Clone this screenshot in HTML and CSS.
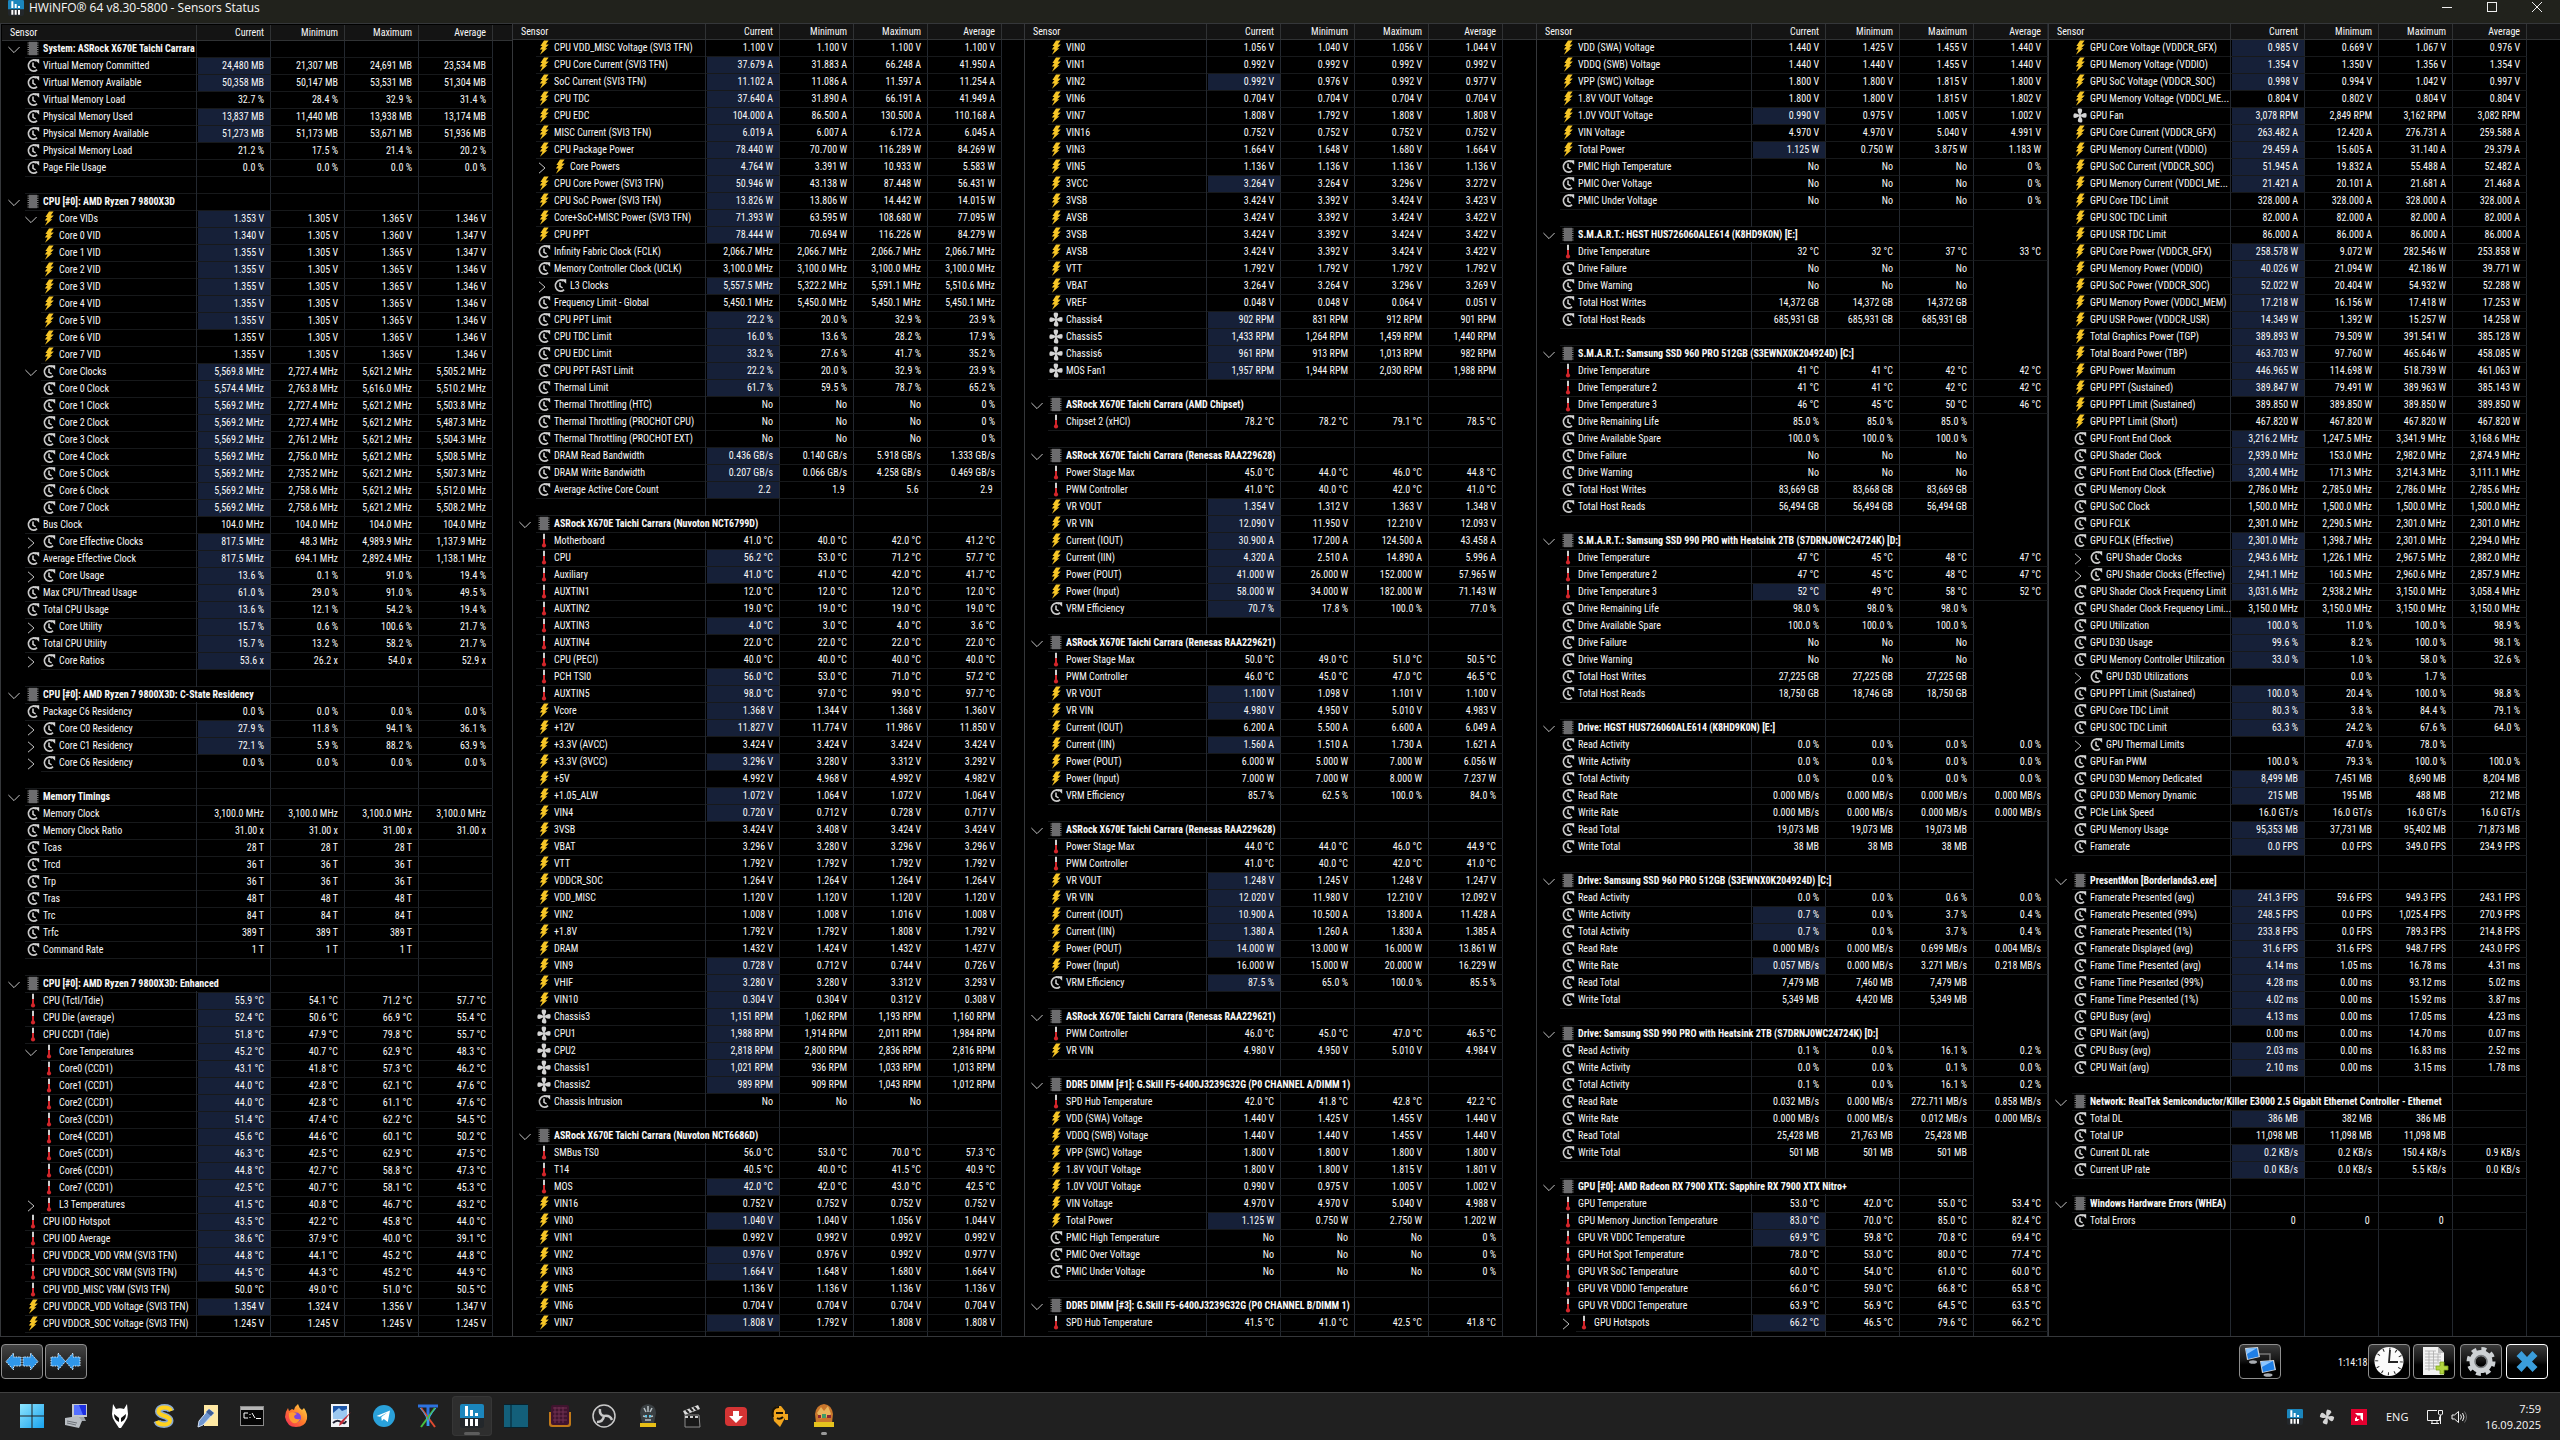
FILE: index.html
```html
<!DOCTYPE html>
<html lang="en">
<head>
<meta charset="utf-8">
<title>HWiNFO® 64 v8.30-5800 - Sensors Status</title>
<link rel="stylesheet" href="styles.css">
</head>
<body>
<svg class="defs" aria-hidden="true">
  <symbol id="i-clock" viewBox="0 0 14 15">
    <path d="M10.6 3.2A5 5.6 0 1 0 11 11.6" fill="none" stroke="#c9c9c9" stroke-width="1.8"/>
    <path d="M8.6 1.2h4.6v4.6z" fill="#d6d6d6"/>
    <path d="M7 4.4v4l2.6 1.4" fill="none" stroke="#d6d6d6" stroke-width="1.5"/>
  </symbol>
  <symbol id="i-volt" viewBox="0 0 14 15">
    <path d="M7 .4h4.6L8.8 4.4h3L8.2 8.2h2.2L3 14.8l2.6-5.2H2.8L5.4 6H3.4z" fill="#f6c526"/>
  </symbol>
  <symbol id="i-temp" viewBox="0 0 14 15">
    <path d="M6 .8h2v7H6z" fill="#cfcfcf"/>
    <path d="M6 6h2v5H6z" fill="#d3262b"/>
    <circle cx="7" cy="12.4" r="2.1" fill="#d3262b"/>
  </symbol>
  <symbol id="i-fan" viewBox="0 0 14 15">
    <g fill="#d4d4d4">
      <path d="M5 .8Q8.800 0 9.200 2 9.200 4.200 7.600 6.600H6.200Q3.800 3 5 .8z"/>
      <path d="M9 14.200Q5.200 15 4.800 13 4.800 10.800 6.400 8.400H7.800Q10.200 12 9 14.200z"/>
      <path d="M.6 9.600Q-.2 5.400 1.800 5.200 4 5.200 6.200 6.800V8.200Q2.600 10.800.6 9.600z"/>
      <path d="M13.400 5.400Q14.200 9.600 12.200 9.800 10 9.800 7.800 8.200V6.800Q11.400 4.200 13.400 5.400z"/>
    </g>
    <circle cx="7" cy="7.500" r="1.600" fill="#d4d4d4"/>
  </symbol>
  <symbol id="i-chip" viewBox="0 0 14 15">
    <path d="M1.500 2h11M1.500 4.200h11M1.500 6.400h11M1.500 8.600h11M1.500 10.800h11M1.500 13h11" stroke="#8a8a8a" stroke-width="1"/>
    <rect x="3" y=".8" width="8" height="13.400" fill="#6c6c6e"/>
  </symbol>
  <symbol id="i-open" viewBox="0 0 12 12">
    <path d="M.4 3l5.600 5.600L11.600 3" fill="none" stroke="#c4c4c4"/>
  </symbol>
  <symbol id="i-closed" viewBox="0 0 12 12">
    <path d="M3 .8L9 6l-6 5.200" fill="none" stroke="#c4c4c4"/>
  </symbol>
  <symbol id="i-hw" viewBox="0 0 24 24">
    <rect width="24" height="24" rx="3" fill="#23272b"/>
    <path d="M0 14V2q0-2 2-2h20q2 0 2 2v12z" fill="#1b86bd"/>
    <path d="M5 2h3v10H5zM10 6h3v6h-3zM15 9h3v3h-3zM5 15h3v7H5zM10 15h3v7h-3zM15 15h3v7h-3z" fill="#fff"/>
  </symbol>
</svg>

<header class="titlebar">
  <svg class="titlebar-icon"><use href="#i-hw"/></svg>
  <h1>HWiNFO® 64 v8.30-5800 - Sensors Status</h1>
  <div class="window-controls">
    <button type="button" aria-label="Minimize"><svg viewBox="0 0 12 12"><path d="M1 6.500h10" stroke="#eee"/></svg></button>
    <button type="button" aria-label="Maximize"><svg viewBox="0 0 12 12"><rect x="1.500" y="1.500" width="9" height="9" fill="none" stroke="#eee"/></svg></button>
    <button type="button" aria-label="Close"><svg viewBox="0 0 12 12"><path d="M1 1l10 10M11 1L1 11" stroke="#eee" fill="none"/></svg></button>
  </div>
</header>

<main class="panels" id="panels"></main>

<section class="toolbar" aria-label="Actions">
  <button type="button" class="tool tool--plain" aria-label="Expand columns">
    <svg viewBox="0 0 38 31"><g fill="#2f97ea" stroke="#d5ecff" stroke-dasharray="1.500 1"><path d="M3 15.500L10.500 7v4H18v9h-7.500v4z"/><path d="M35 15.500L27.500 7v4H20v9h7.500v4z"/></g></svg>
  </button>
  <button type="button" class="tool tool--plain" aria-label="Shrink columns">
    <svg viewBox="0 0 38 31"><g fill="#2f97ea" stroke="#d5ecff" stroke-dasharray="1.500 1"><path d="M18.500 15.500L11 7v4H4v9h7v4z"/><path d="M18.500 15.500L26 7v4h7v9h-7v4z"/></g></svg>
  </button>
  <span class="spacer"></span>
  <button type="button" class="tool tool--network" aria-label="Remote sensors">
    <svg viewBox="0 0 38 31">
      <path d="M18 8h11v8" fill="none" stroke="#777" stroke-width="1.500"/>
      <ellipse cx="12" cy="16" rx="4" ry="1.800" fill="#a9adb2"/><path d="M4 2l13-1 2 10-13 3z" fill="#cfd6dd"/><path d="M5 3l11-1 1.600 8.400L7 13z" fill="#1f7fe6"/><path d="M5 3l11-1L6 8z" fill="#8cc6ff"/>
      <ellipse cx="27" cy="29" rx="4.500" ry="1.800" fill="#a9adb2"/><path d="M19 15l14-1 2 10-14 3z" fill="#cfd6dd"/><path d="M20 16l12-1 1.600 8.400L22 26z" fill="#1f7fe6"/><path d="M20 16l12-1-11 6z" fill="#8cc6ff"/>
    </svg>
  </button>
  <time class="elapsed">1:14:18</time>
  <button type="button" class="tool tool--clock" aria-label="Reset clock">
    <svg viewBox="0 0 38 31"><circle cx="19" cy="15.500" r="14.500" fill="#fafafa"/><circle cx="19" cy="15.500" r="12.300" fill="none" stroke="#222" stroke-width="3" stroke-dasharray="1 5.440"/><path d="M20 4l-1 12h9" fill="none" stroke="#222" stroke-width="1.800"/></svg>
  </button>
  <button type="button" class="tool" aria-label="Log to file">
    <svg viewBox="0 0 38 31"><path d="M8 1h15l6 6v22H8z" fill="#f2f2f2"/><path d="M23 1v6h6z" fill="#bbb"/><path d="M10 5h11M10 8h16M10 11h16M10 14h16M10 17h16M10 20h11M10 23h10M14 5v20M18.500 5v18M23 8v8" stroke="#a9a9a9" stroke-width=".8"/><path d="M25 16h4v4h4v4h-4v4h-4v-4h-4v-4h4z" fill="#b3d640" stroke="#7ea31c" stroke-width=".8"/></svg>
  </button>
  <button type="button" class="tool tool--settings" aria-label="Settings">
    <svg viewBox="0 0 38 31"><circle cx="19" cy="15.500" r="12.500" fill="none" stroke="#cdd1d4" stroke-width="4" stroke-dasharray="4.900 4.917"/><circle cx="19" cy="15.500" r="8.500" fill="none" stroke="#cdd1d4" stroke-width="6"/><circle cx="19" cy="15.500" r="6" fill="none" stroke="#777b7e" stroke-width="1.500"/></svg>
  </button>
  <button type="button" class="tool tool--active" aria-label="Close sensors">
    <svg viewBox="0 0 38 31"><path d="M13.500 5L19 11l5.500-6 5 5-5.500 5.500L29.500 21l-5 5L19 20l-5.500 6-5-5 5.500-5.500L8.500 10z" fill="#3a9ddb"/></svg>
  </button>
</section>

<footer class="taskbar">
  <nav class="apps" aria-label="Taskbar">
    <button type="button" aria-label="Start"><svg viewBox="0 0 24 24"><defs><linearGradient id="win" x2="1" y2="1"><stop stop-color="#8fe6ff"/><stop offset="1" stop-color="#18a2ee"/></linearGradient></defs><path d="M0 0h11.500v11.500H0zM12.500 0H24v11.500H12.500zM0 12.500h11.500V24H0zM12.500 12.500H24V24H12.500z" fill="url(#win)"/></svg></button>
    <button type="button" aria-label="Terminal client"><svg viewBox="0 0 24 24"><path d="M8 0h15v13H8z" fill="#c3c7cc"/><path d="M10 1h12v10H10z" fill="#1d2fe0"/><path d="M10 1h5l4 10h-9z" fill="#5570ff"/><path d="M10 13h10l2 4H8z" fill="#9da2a8"/><path d="M1 14l13-2 4 5-3 7-14-3z" fill="#b8bdc2"/><path d="M3 17l10 2M3 19l9 2" stroke="#6c7177"/></svg></button>
    <button type="button" aria-label="Music player"><svg viewBox="0 0 24 24"><path d="M5 0l3 5q4-1.500 8 0l3-5 1 10q0 4-3 8l-4 6h-2l-4-6Q4 14 4 10z" fill="#fff"/><path d="M6 10l5 4v4q-5-2-5-8zM18 10l-5 4v4q5-2 5-8z" fill="#111"/></svg></button>
    <button type="button" aria-label="Sync"><svg viewBox="0 0 24 24"><path d="M19 7C17.500 2.500 7 2 6.500 7.500c0 5 11.500 3.500 11.500 9C18 22 6.500 21.500 5 17" fill="none" stroke="#8ba9cf" stroke-width="7"/><path d="M19 7C17.500 2.500 7 2 6.500 7.500c0 5 11.500 3.500 11.500 9C18 22 6.500 21.500 5 17" fill="none" stroke="#ffd21f" stroke-width="4"/></svg></button>
    <button type="button" aria-label="Notes"><svg viewBox="0 0 24 24"><path d="M8 1h14v21H8z" fill="#ffe9a4"/><path d="M13 5l5 4L7 21l-5 2 1-6z" fill="#6f96cf" stroke="#d5e2f5"/><path d="M13 5l5 4-3 3-5-4z" fill="#3f5f96"/></svg></button>
    <button type="button" aria-label="Command prompt"><svg viewBox="0 0 24 24"><rect x=".5" y="2.500" width="23" height="19" fill="#050505" stroke="#8b8b8b"/><path d="M1 3h22v3H1z" fill="#b5b5b5"/><path d="M8 9H4v5h4M10 10v1M10 13v1M12 9l3 5M16 14.500h5" stroke="#fff" fill="none"/></svg></button>
    <button type="button" aria-label="Firefox"><svg viewBox="0 0 24 24"><defs><linearGradient id="ff" x1="1" x2="0" y2="1"><stop stop-color="#ffe14a"/><stop offset=".5" stop-color="#ff7a2a"/><stop offset="1" stop-color="#f0245f"/></linearGradient></defs><path d="M14 0q1 4 4 6l2-2q4 6 3 11-2 8-11 8T1 13Q1 8 4 4l1 3 3-2 2 1q1-4 4-6z" fill="url(#ff)"/><circle cx="12" cy="13.500" r="5" fill="#7b45e0"/><path d="M5 9q4-2 8 1-3 1-3 3 1 3 6 2-2 5-7 4-5-3-4-10z" fill="#ff9a32"/></svg></button>
    <button type="button" aria-label="Image editor"><svg viewBox="0 0 24 24"><path d="M3 0h18v23H3z" fill="#f1f3f6"/><path d="M5 2h14v13H5z" fill="#1d56a8"/><path d="M5 9l6-5 3 3 5-2v10H5z" fill="#9cc8f0"/><path d="M5 19q4-4 8-1t5-1" fill="none" stroke="#223" stroke-width="2"/><path d="M23 8l-9 12-3 2 1-4z" fill="#c42b36"/></svg></button>
    <button type="button" aria-label="Telegram"><svg viewBox="0 0 24 24"><circle cx="12" cy="12" r="11" fill="#2aa1da"/><path d="M4.500 12L18 6.500 15.800 18l-4-3-2 2-.5-4 6-4.500-7.500 4.200z" fill="#fff"/></svg></button>
    <button type="button" aria-label="Monitoring"><svg viewBox="0 0 24 24"><path d="M2 2h20M12 2v20" stroke="#2d72e0" stroke-width="3"/><path d="M5 4l14 19" stroke="#e04a30" stroke-width="2"/><path d="M19 4L5 23" stroke="#47c13d" stroke-width="2"/><path d="M4 4q8 8 8 18M20 4q-8 8-8 18" stroke="#3aa6ee" fill="none"/></svg></button>
    <button type="button" class="current" aria-label="HWiNFO"><svg><use href="#i-hw"/></svg></button>
    <button type="button" aria-label="Library"><svg viewBox="0 0 24 24"><path d="M0 1h24v22H0z" fill="#135f7a"/><path d="M7 1v22M0 .5h24M0 23.500h24" stroke="#06222e"/></svg></button>
    <button type="button" aria-label="Calculator"><svg viewBox="0 0 24 24"><path d="M1 8v12q0 3 3 3h16q3 0 3-3V8" fill="#c07818"/><rect x="3" y="1" width="18" height="20" rx="2" fill="#40142f"/><path d="M5 4h14M5 8h14M5 12h14M5 16h14M7 3v16M11 3v16M15 3v16" stroke="#713052"/></svg></button>
    <button type="button" aria-label="OBS"><svg viewBox="0 0 24 24"><circle cx="12" cy="12" r="11" fill="#242426" stroke="#c9c9c9" stroke-width="1.500"/><path d="M12 12q-5-1-4-7M12 12q6-1 8 4M12 12q-1 6-7 6" fill="none" stroke="#c9c9c9" stroke-width="2.500"/></svg></button>
    <button type="button" aria-label="Game launcher"><svg viewBox="0 0 24 24"><path d="M4 9q0-8 8-9 8 1 8 9l-2 10H6z" fill="#3a3f42"/><path d="M8 4l2 4M12 2v6M16 4l-2 4M7 12l4 1M17 12l-4 1M9 16h6" stroke="#b9c2c6" stroke-width="1.500"/><path d="M9 11h2v2H9zM13 11h2v2h-2z" fill="#5ec8ea"/><path d="M4 19h16v4H4z" fill="#e8bf16"/></svg></button>
    <button type="button" aria-label="Media player"><svg viewBox="0 0 24 24"><path d="M3 7l15-6 2 4L5 11z" fill="#dcdcdc"/><path d="M6 6l3 3M10 4l3 3M14 3l3 3" stroke="#222" stroke-width="2"/><path d="M5 11h14l1 12H5z" fill="#191919" stroke="#8b8b8b"/><path d="M5 13h14" stroke="#d0d0d0" stroke-width="2" stroke-dasharray="3 2"/></svg></button>
    <button type="button" aria-label="Downloader"><svg viewBox="0 0 24 24"><rect x="1" y="3" width="22" height="19" rx="4" fill="#d43434"/><path d="M9 7h6v5h4l-7 7-7-7h4z" fill="#fff"/></svg></button>
    <button type="button" aria-label="Radio"><svg viewBox="0 0 24 24"><path d="M5 11q0-10 8-9l4 5v7l-5 9-6-6z" fill="#f2a51d"/><path d="M5 13Q3 3 11 3M8 9h7M9 14q3 2 6-1" stroke="#1a1205" stroke-width="2" fill="none"/><path d="M17 10h3v6h-3z" fill="#f2a51d"/></svg></button>
    <button type="button" class="running" aria-label="Borderlands 3"><svg viewBox="0 0 24 24"><path d="M3 10q1-9 9-10 8 1 9 10l-1 9H4z" fill="#c9762b"/><path d="M5 9l4-6 3 4 4-5 3 8-4 4-3-4-3 5z" fill="#e8b55d"/><path d="M6 11h3v3H6zM15 11h4v3h-4z" fill="#8c2734"/><path d="M10 10h4v4h-4z" fill="#3f9c67"/><path d="M2 18h20v5H2z" fill="#e6c31e"/></svg></button>
  </nav>
  <div class="tray">
    <svg class="tray-hw"><use href="#i-hw"/></svg>
    <svg class="tray-fan" viewBox="0 0 14 15"><g transform="rotate(20 7 7.500)"><use href="#i-fan" width="14" height="15"/></g></svg>
    <svg class="tray-amd" viewBox="0 0 16 16"><rect width="16" height="16" fill="#e4002f"/><path d="M4 4h8v8L9.500 9.500v-3h-3z" fill="#fff"/><path d="M6 7.500L4 9.500V12h2.500l2-2H6z" fill="#fff"/></svg>
    <span class="lang">ENG</span>
    <svg class="tray-net" viewBox="0 0 16 16"><path d="M10 1.500H.500v10h12v-4M4 14.500h8M5 11.500v3M10 11.500v3" fill="none" stroke="#f2f2f2"/><path d="M11.500 1.500h4v3.500l-1 1h-2l-1-1zM13.500 6v9" fill="none" stroke="#f2f2f2"/></svg>
    <svg class="tray-sound" viewBox="0 0 16 16"><path d="M1 6h2.500L7.500 2.500v11L3.500 10H1z" fill="none" stroke="#f2f2f2"/><path d="M9.500 5.500q1.800 2.500 0 5M11.500 4q3 4 0 8" fill="none" stroke="#f2f2f2"/><path d="M13.500 2.500q4 5.500 0 11" fill="none" stroke="#6a6a6a"/></svg>
    <div class="datetime"><time>7:59</time><time>16.09.2025</time></div>
  </div>
</footer>
<script src="sensors.js"></script>
</body>
</html>
```
FILE: styles.css
```css
* { box-sizing: border-box; }

body {
  margin: 0;
  min-height: 100vh;
  display: flex;
  flex-direction: column;
  background: #000;
  color: #f8f8f8;
  font: 10px/16px "Roboto Condensed", "Roboto", "Noto Sans", sans-serif;
}

button {
  padding: 0;
  border: 0;
  background: none;
  color: inherit;
  font: inherit;
}

svg { display: block; }
.defs { display: none; }
.spacer { flex: 1; }

/* Title bar */
.titlebar {
  display: flex;
  align-items: flex-start;
  height: 23px;
  padding-left: 8px;
  background: #21221c;
}
.titlebar-icon { width: 16px; height: 16px; }
.titlebar h1 {
  flex: 1;
  margin: 0 0 0 5px;
  font: 400 12px/15px "Open Sans", "Noto Sans", sans-serif;
}
.window-controls {
  display: flex;
  gap: 33px;
  padding: 1px 17px 0 0;
}
.window-controls svg { width: 12px; height: 12px; }

/* Sensor panels */
.panels {
  flex: 1;
  display: grid;
  grid-template-columns: repeat(5, minmax(0, 1fr));
  border-bottom: 1px solid #35373a;
}
.panel {
  display: flex;
  flex-direction: column;
  border-top: 1px solid #35373a;
  border-left: 1px solid #35373a;
}
.panel--first { padding: 1px 0 0 1px; }

.sensors {
  width: 100%;
  table-layout: fixed;
  border-collapse: separate;
  border-spacing: 0;
}
.w-value { width: 74px; }
.w-195 { width: 195px; }
.w-193 { width: 193px; }
.w-182 { width: 182px; }
.w-215 { width: 215px; }

.sensors th,
.sensors td {
  height: 17px;
  padding: 0;
  border-right: 1px solid #23282f;
  text-align: right;
  font-weight: 400;
  white-space: nowrap;
}
.sensors thead th {
  height: 16px;
  line-height: 15px;
  padding-right: 6px;
  background: #141414;
  border-right-color: #303234;
  border-bottom: 1px solid #303234;
}
.sensors thead th:first-child { padding-left: 8px; text-align: left; }
.sensors td { padding-right: 6px; border-bottom: 1px solid #17191b; }
.sensors td.changed {
  background: #162038;
  box-shadow: inset 1px 0 #000;
}
.sensors tr > :last-child { border-right: 0; }
.panel--full .sensors tr > :last-child { border-right: 1px solid #23282f; }
.sensors tbody td:last-child:empty { border-bottom: 0; }
.sensors tbody .keep:empty { border-bottom: 1px solid #17191b; }

.name { display: flex; height: 17px; text-align: left; }
.twist { flex: none; width: 23px; padding: 3px 0 0 6px; }
.name--child .twist { width: 39px; padding-left: 23px; }
.twist svg { width: 12px; height: 12px; }
.label {
  flex: 1;
  min-width: 0;
  display: flex;
  gap: 3px;
  padding-left: 1px;
  border-bottom: 1px solid #17191b;
}
.label svg { flex: none; width: 14px; height: 15px; }
.name--group .label span {
  position: relative;
  flex: none;
  height: 15px;
  background: #000;
  font-weight: 700;
}

/* Column rules keep running below the last row */
.rest { flex: 1; display: flex; }
.rest i { flex: none; border-right: 1px solid #23282f; }

/* Bottom toolbar */
.toolbar {
  display: flex;
  align-items: flex-start;
  height: 55px;
  padding: 7px 12px 0 1px;
  background: #000;
}
.tool {
  width: 42px;
  height: 35px;
  border: 1px solid #8e8e8e;
  border-radius: 4px;
  background: linear-gradient(#3a3a3a, #161616 45%, #000 60%);
}
.tool svg { width: 38px; height: 31px; margin: 1px; }
.tool--plain { margin-right: 2px; background: linear-gradient(#444, #181818 80%); }
.tool--network { margin-right: 57px; }
.elapsed { width: 28px; line-height: 38px; white-space: nowrap; }
.tool--clock { margin: 0 3px 0 2px; }
.tool--settings { margin: 0 4px 0 5px; }
.tool--active { border: 1px solid #fff; }

/* Taskbar */
.taskbar {
  display: flex;
  justify-content: space-between;
  height: 48px;
  border-top: 1px solid #404040;
  background: #202020;
  font: 11px/16px "Open Sans", "Noto Sans", sans-serif;
}
.apps { display: flex; gap: 4px; padding: 3px 0 0 12px; }
.apps button {
  position: relative;
  width: 40px;
  height: 40px;
  border-radius: 4px;
}
.apps svg { width: 24px; height: 24px; margin: 0 auto; }
.apps .current { background: #2e2e2e; box-shadow: inset 0 0 0 1px #363636; }
.apps .current::after,
.apps .running::after {
  content: "";
  position: absolute;
  left: 17px;
  bottom: 1px;
  width: 6px;
  height: 3px;
  border-radius: 2px;
  background: #9a9a9a;
}
.apps .current::after { left: 12px; width: 16px; background: #5c5c5c; }

.tray {
  display: flex;
  align-items: center;
  padding-right: 19px;
}
.tray svg { flex: none; width: 16px; height: 16px; }
.tray-fan { margin: 0 16px; }
.lang { width: 22px; margin: 0 19px; }
.tray-sound { margin-left: 8px; }
.datetime {
  display: flex;
  flex-direction: column;
  width: 62px;
  margin-left: 12px;
  text-align: right;
}
```
FILE: sensors.js
```js
/*
 * One line per row:  kind label|current|minimum|maximum|average|unit
 *   kind   c clock, v voltage/power, t temperature, f fan, # group title
 *   prefix . child row, > closed branch, - open branch
 *   *      current value has just changed
 *   =      the value before it is repeated
 */
const PANELS = [
{ width: 'w-195', rows: `
# System: ASRock X670E Taichi Carrara
c Virtual Memory Committed|*24,480|21,307|24,691|23,534|MB
c Virtual Memory Available|*50,358|50,147|53,531|51,304|MB
c Virtual Memory Load|32.7|28.4|32.9|31.4|%
c Physical Memory Used|*13,837|11,440|13,938|13,174|MB
c Physical Memory Available|*51,273|51,173|53,671|51,936|MB
c Physical Memory Load|21.2|17.5|21.4|20.2|%
c Page File Usage|0.0|0.0|0.0|0.0|%

# CPU [#0]: AMD Ryzen 7 9800X3D
-v Core VIDs|*1.353|1.305|1.365|1.346|V
.v Core 0 VID|*1.340|1.305|1.360|1.347|V
.v Core 1 VID|*1.355|1.305|1.365|1.347|V
.v Core 2 VID|*1.355|1.305|1.365|1.346|V
.v Core 3 VID|*1.355|1.305|1.365|1.346|V
.v Core 4 VID|*1.355|1.305|1.365|1.346|V
.v Core 5 VID|*1.355|1.305|1.365|1.346|V
.v Core 6 VID|1.355|1.305|1.365|1.346|V
.v Core 7 VID|1.355|1.305|1.365|1.346|V
-c Core Clocks|*5,569.8|2,727.4|5,621.2|5,505.2|MHz
.c Core 0 Clock|*5,574.4|2,763.8|5,616.0|5,510.2|MHz
.c Core 1 Clock|*5,569.2|2,727.4|5,621.2|5,503.8|MHz
.c Core 2 Clock|*5,569.2|2,727.4|5,621.2|5,487.3|MHz
.c Core 3 Clock|*5,569.2|2,761.2|5,621.2|5,504.3|MHz
.c Core 4 Clock|*5,569.2|2,756.0|5,621.2|5,508.5|MHz
.c Core 5 Clock|*5,569.2|2,735.2|5,621.2|5,507.3|MHz
.c Core 6 Clock|*5,569.2|2,758.6|5,621.2|5,512.0|MHz
.c Core 7 Clock|*5,569.2|2,758.6|5,621.2|5,508.2|MHz
c Bus Clock|104.0|=|=|=|MHz
>c Core Effective Clocks|*817.5|48.3|4,989.9|1,137.9|MHz
c Average Effective Clock|*817.5|694.1|2,892.4|1,138.1|MHz
>c Core Usage|*13.6|0.1|91.0|19.4|%
c Max CPU/Thread Usage|*61.0|29.0|91.0|49.5|%
c Total CPU Usage|*13.6|12.1|54.2|19.4|%
>c Core Utility|*15.7|0.6|100.6|21.7|%
c Total CPU Utility|*15.7|13.2|58.2|21.7|%
>c Core Ratios|*53.6|26.2|54.0|52.9|x

# CPU [#0]: AMD Ryzen 7 9800X3D: C-State Residency
c Package C6 Residency|0.0|=|=|=|%
>c Core C0 Residency|*27.9|11.8|94.1|36.1|%
>c Core C1 Residency|*72.1|5.9|88.2|63.9|%
>c Core C6 Residency|0.0|=|=|=|%

# Memory Timings
c Memory Clock|3,100.0|=|=|=|MHz
c Memory Clock Ratio|31.00|=|=|=|x
c Tcas|28|=|=||T
c Trcd|36|=|=||T
c Trp|36|=|=||T
c Tras|48|=|=||T
c Trc|84|=|=||T
c Trfc|389|=|=||T
c Command Rate|1|=|=||T

# CPU [#0]: AMD Ryzen 7 9800X3D: Enhanced
t CPU (Tctl/Tdie)|*55.9|54.1|71.2|57.7|°C
t CPU Die (average)|*52.4|50.6|66.9|55.4|°C
t CPU CCD1 (Tdie)|*51.8|47.9|79.8|55.7|°C
-t Core Temperatures|*45.2|40.7|62.9|48.3|°C
.t Core0 (CCD1)|*43.1|41.8|57.3|46.2|°C
.t Core1 (CCD1)|*44.0|42.8|62.1|47.6|°C
.t Core2 (CCD1)|*44.0|42.8|61.1|47.6|°C
.t Core3 (CCD1)|*51.4|47.4|62.2|54.5|°C
.t Core4 (CCD1)|*45.6|44.6|60.1|50.2|°C
.t Core5 (CCD1)|*46.3|42.5|62.9|47.5|°C
.t Core6 (CCD1)|*44.8|42.7|58.8|47.3|°C
.t Core7 (CCD1)|*42.5|40.7|58.1|45.3|°C
>t L3 Temperatures|*41.5|40.8|46.7|43.2|°C
t CPU IOD Hotspot|*43.5|42.2|45.8|44.0|°C
t CPU IOD Average|*38.6|37.9|40.0|39.1|°C
t CPU VDDCR_VDD VRM (SVI3 TFN)|*44.8|44.1|45.2|44.8|°C
t CPU VDDCR_SOC VRM (SVI3 TFN)|*44.5|44.3|45.2|44.9|°C
t CPU VDD_MISC VRM (SVI3 TFN)|50.0|49.0|51.0|50.5|°C
v CPU VDDCR_VDD Voltage (SVI3 TFN)|*1.354|1.324|1.356|1.347|V
v CPU VDDCR_SOC Voltage (SVI3 TFN)|1.245|=|=|=|V
` },
{ width: 'w-193', rows: `
v CPU VDD_MISC Voltage (SVI3 TFN)|1.100|=|=|=|V
v CPU Core Current (SVI3 TFN)|*37.679|31.883|66.248|41.950|A
v SoC Current (SVI3 TFN)|*11.102|11.086|11.597|11.254|A
v CPU TDC|*37.640|31.890|66.191|41.949|A
v CPU EDC|*104.000|86.500|130.500|110.168|A
v MISC Current (SVI3 TFN)|*6.019|6.007|6.172|6.045|A
v CPU Package Power|*78.440|70.700|116.289|84.269|W
>v Core Powers|*4.764|3.391|10.933|5.583|W
v CPU Core Power (SVI3 TFN)|*50.946|43.138|87.448|56.431|W
v CPU SoC Power (SVI3 TFN)|*13.826|13.806|14.442|14.015|W
v Core+SoC+MISC Power (SVI3 TFN)|*71.393|63.595|108.680|77.095|W
v CPU PPT|*78.444|70.694|116.226|84.279|W
c Infinity Fabric Clock (FCLK)|2,066.7|=|=|=|MHz
c Memory Controller Clock (UCLK)|3,100.0|=|=|=|MHz
>c L3 Clocks|*5,557.5|5,322.2|5,591.1|5,510.6|MHz
c Frequency Limit - Global|5,450.1|5,450.0|5,450.1|5,450.1|MHz
c CPU PPT Limit|*22.2|20.0|32.9|23.9|%
c CPU TDC Limit|*16.0|13.6|28.2|17.9|%
c CPU EDC Limit|*33.2|27.6|41.7|35.2|%
c CPU PPT FAST Limit|*22.2|20.0|32.9|23.9|%
c Thermal Limit|*61.7|59.5|78.7|65.2|%
c Thermal Throttling (HTC)|No|=|=|0 %
c Thermal Throttling (PROCHOT CPU)|No|=|=|0 %
c Thermal Throttling (PROCHOT EXT)|No|=|=|0 %
c DRAM Read Bandwidth|*0.436|0.140|5.918|1.333|GB/s
c DRAM Write Bandwidth|*0.207|0.066|4.258|0.469|GB/s
c Average Active Core Count|*2.2|1.9|5.6|2.9|~

# ASRock X670E Taichi Carrara (Nuvoton NCT6799D)
t Motherboard|41.0|40.0|42.0|41.2|°C
t CPU|*56.2|53.0|71.2|57.7|°C
t Auxiliary|*41.0|41.0|42.0|41.7|°C
t AUXTIN1|12.0|=|=|=|°C
t AUXTIN2|19.0|=|=|=|°C
t AUXTIN3|*4.0|3.0|4.0|3.6|°C
t AUXTIN4|22.0|=|=|=|°C
t CPU (PECI)|40.0|=|=|=|°C
t PCH TSI0|*56.0|53.0|71.0|57.2|°C
t AUXTIN5|*98.0|97.0|99.0|97.7|°C
v Vcore|*1.368|1.344|1.368|1.360|V
v +12V|*11.827|11.774|11.986|11.850|V
v +3.3V (AVCC)|3.424|=|=|=|V
v +3.3V (3VCC)|*3.296|3.280|3.312|3.292|V
v +5V|4.992|4.968|4.992|4.982|V
v +1.05_ALW|*1.072|1.064|1.072|1.064|V
v VIN4|*0.720|0.712|0.728|0.717|V
v 3VSB|3.424|3.408|3.424|3.424|V
v VBAT|3.296|3.280|3.296|3.296|V
v VTT|1.792|=|=|=|V
v VDDCR_SOC|1.264|=|=|=|V
v VDD_MISC|1.120|=|=|=|V
v VIN2|1.008|1.008|1.016|1.008|V
v +1.8V|1.792|1.792|1.808|1.792|V
v DRAM|1.432|1.424|1.432|1.427|V
v VIN9|*0.728|0.712|0.744|0.726|V
v VHIF|*3.280|3.280|3.312|3.293|V
v VIN10|*0.304|0.304|0.312|0.308|V
f Chassis3|*1,151|1,062|1,193|1,160|RPM
f CPU1|*1,988|1,914|2,011|1,984|RPM
f CPU2|*2,818|2,800|2,836|2,816|RPM
f Chassis1|*1,021|936|1,033|1,013|RPM
f Chassis2|*989|909|1,043|1,012|RPM
c Chassis Intrusion|No|=|=|

# ASRock X670E Taichi Carrara (Nuvoton NCT6686D)
t SMBus TS0|56.0|53.0|70.0|57.3|°C
t T14|40.5|40.0|41.5|40.9|°C
t MOS|*42.0|42.0|43.0|42.5|°C
v VIN16|0.752|=|=|=|V
v VIN0|*1.040|1.040|1.056|1.044|V
v VIN1|0.992|=|=|=|V
v VIN2|*0.976|0.976|0.992|0.977|V
v VIN3|*1.664|1.648|1.680|1.664|V
v VIN5|1.136|=|=|=|V
v VIN6|0.704|=|=|=|V
v VIN7|*1.808|1.792|1.808|1.808|V
` },
{ width: 'w-182', rows: `
v VIN0|1.056|1.040|1.056|1.044|V
v VIN1|0.992|=|=|=|V
v VIN2|*0.992|0.976|0.992|0.977|V
v VIN6|0.704|=|=|=|V
v VIN7|1.808|1.792|1.808|1.808|V
v VIN16|0.752|=|=|=|V
v VIN3|1.664|1.648|1.680|1.664|V
v VIN5|1.136|=|=|=|V
v 3VCC|*3.264|3.264|3.296|3.272|V
v 3VSB|3.424|3.392|3.424|3.423|V
v AVSB|3.424|3.392|3.424|3.422|V
v 3VSB|3.424|3.392|3.424|3.422|V
v AVSB|3.424|3.392|3.424|3.422|V
v VTT|1.792|=|=|=|V
v VBAT|3.264|3.264|3.296|3.269|V
v VREF|0.048|0.048|0.064|0.051|V
f Chassis4|*902|831|912|901|RPM
f Chassis5|*1,433|1,264|1,459|1,440|RPM
f Chassis6|*961|913|1,013|982|RPM
f MOS Fan1|*1,957|1,944|2,030|1,988|RPM

# ASRock X670E Taichi Carrara (AMD Chipset)
t Chipset 2 (xHCI)|78.2|78.2|79.1|78.5|°C

# ASRock X670E Taichi Carrara (Renesas RAA229628)
t Power Stage Max|45.0|44.0|46.0|44.8|°C
t PWM Controller|41.0|40.0|42.0|41.0|°C
v VR VOUT|*1.354|1.312|1.363|1.348|V
v VR VIN|*12.090|11.950|12.210|12.093|V
v Current (IOUT)|*30.900|17.200|124.500|43.458|A
v Current (IIN)|*4.320|2.510|14.890|5.996|A
v Power (POUT)|*41.000|26.000|152.000|57.965|W
v Power (Input)|*58.000|34.000|182.000|71.143|W
c VRM Efficiency|*70.7|17.8|100.0|77.0|%

# ASRock X670E Taichi Carrara (Renesas RAA229621)
t Power Stage Max|50.0|49.0|51.0|50.5|°C
t PWM Controller|46.0|45.0|47.0|46.5|°C
v VR VOUT|*1.100|1.098|1.101|1.100|V
v VR VIN|*4.980|4.950|5.010|4.983|V
v Current (IOUT)|6.200|5.500|6.600|6.049|A
v Current (IIN)|*1.560|1.510|1.730|1.621|A
v Power (POUT)|6.000|5.000|7.000|6.056|W
v Power (Input)|7.000|7.000|8.000|7.237|W
c VRM Efficiency|85.7|62.5|100.0|84.0|%

# ASRock X670E Taichi Carrara (Renesas RAA229628)
t Power Stage Max|44.0|44.0|46.0|44.9|°C
t PWM Controller|41.0|40.0|42.0|41.0|°C
v VR VOUT|*1.248|1.245|1.248|1.247|V
v VR VIN|*12.020|11.980|12.210|12.092|V
v Current (IOUT)|*10.900|10.500|13.800|11.428|A
v Current (IIN)|*1.380|1.260|1.830|1.385|A
v Power (POUT)|*14.000|13.000|16.000|13.861|W
v Power (Input)|16.000|15.000|20.000|16.229|W
c VRM Efficiency|*87.5|65.0|100.0|85.5|%

# ASRock X670E Taichi Carrara (Renesas RAA229621)
t PWM Controller|46.0|45.0|47.0|46.5|°C
v VR VIN|4.980|4.950|5.010|4.984|V

# DDR5 DIMM [#1]: G.Skill F5-6400J3239G32G (P0 CHANNEL A/DIMM 1)
t SPD Hub Temperature|42.0|41.8|42.8|42.2|°C
v VDD (SWA) Voltage|1.440|1.425|1.455|1.440|V
v VDDQ (SWB) Voltage|1.440|1.440|1.455|1.440|V
v VPP (SWC) Voltage|1.800|=|=|=|V
v 1.8V VOUT Voltage|1.800|1.800|1.815|1.801|V
v 1.0V VOUT Voltage|0.990|0.975|1.005|1.002|V
v VIN Voltage|4.970|4.970|5.040|4.988|V
v Total Power|*1.125|0.750|2.750|1.202|W
c PMIC High Temperature|No|=|=|0 %
c PMIC Over Voltage|No|=|=|0 %
c PMIC Under Voltage|No|=|=|0 %

# DDR5 DIMM [#3]: G.Skill F5-6400J3239G32G (P0 CHANNEL B/DIMM 1)
t SPD Hub Temperature|41.5|41.0|42.5|41.8|°C
` },
{ width: 'w-215', full: true, rows: `
v VDD (SWA) Voltage|1.440|1.425|1.455|1.440|V
v VDDQ (SWB) Voltage|1.440|1.440|1.455|1.440|V
v VPP (SWC) Voltage|1.800|1.800|1.815|1.800|V
v 1.8V VOUT Voltage|1.800|1.800|1.815|1.802|V
v 1.0V VOUT Voltage|*0.990|0.975|1.005|1.002|V
v VIN Voltage|4.970|4.970|5.040|4.991|V
v Total Power|*1.125|0.750|3.875|1.183|W
c PMIC High Temperature|No|=|=|0 %
c PMIC Over Voltage|No|=|=|0 %
c PMIC Under Voltage|No|=|=|0 %

# S.M.A.R.T.: HGST HUS726060ALE614 (K8HD9K0N) [E:]
t Drive Temperature|32|32|37|33|°C
c Drive Failure|No|=|=|
c Drive Warning|No|=|=|
c Total Host Writes|14,372|=|=||GB
c Total Host Reads|685,931|=|=||GB

# S.M.A.R.T.: Samsung SSD 960 PRO 512GB (S3EWNX0K204924D) [C:]
t Drive Temperature|41|41|42|42|°C
t Drive Temperature 2|41|41|42|42|°C
t Drive Temperature 3|46|45|50|46|°C
c Drive Remaining Life|85.0|=|=||%
c Drive Available Spare|100.0|=|=||%
c Drive Failure|No|=|=|
c Drive Warning|No|=|=|
c Total Host Writes|83,669|83,668|83,669||GB
c Total Host Reads|56,494|=|=||GB

# S.M.A.R.T.: Samsung SSD 990 PRO with Heatsink 2TB (S7DRNJ0WC24724K) [D:]
t Drive Temperature|47|45|48|47|°C
t Drive Temperature 2|47|45|48|47|°C
t Drive Temperature 3|*52|49|58|52|°C
c Drive Remaining Life|98.0|=|=||%
c Drive Available Spare|100.0|=|=||%
c Drive Failure|No|=|=|
c Drive Warning|No|=|=|
c Total Host Writes|27,225|=|=||GB
c Total Host Reads|18,750|18,746|18,750||GB

# Drive: HGST HUS726060ALE614 (K8HD9K0N) [E:]
c Read Activity|0.0|=|=|=|%
c Write Activity|0.0|=|=|=|%
c Total Activity|0.0|=|=|=|%
c Read Rate|0.000|=|=|=|MB/s
c Write Rate|0.000|=|=|=|MB/s
c Read Total|19,073|=|=||MB
c Write Total|38|=|=||MB

# Drive: Samsung SSD 960 PRO 512GB (S3EWNX0K204924D) [C:]
c Read Activity|0.0|0.0|0.6|0.0|%
c Write Activity|*0.7|0.0|3.7|0.4|%
c Total Activity|*0.7|0.0|3.7|0.4|%
c Read Rate|0.000|0.000|0.699|0.004|MB/s
c Write Rate|*0.057|0.000|3.271|0.218|MB/s
c Read Total|7,479|7,460|7,479||MB
c Write Total|5,349|4,420|5,349||MB

# Drive: Samsung SSD 990 PRO with Heatsink 2TB (S7DRNJ0WC24724K) [D:]
c Read Activity|0.1|0.0|16.1|0.2|%
c Write Activity|0.0|0.0|0.1|0.0|%
c Total Activity|0.1|0.0|16.1|0.2|%
c Read Rate|0.032|0.000|272.711|0.858|MB/s
c Write Rate|0.000|0.000|0.012|0.000|MB/s
c Read Total|25,428|21,763|25,428||MB
c Write Total|501|=|=||MB

# GPU [#0]: AMD Radeon RX 7900 XTX: Sapphire RX 7900 XTX Nitro+
t GPU Temperature|53.0|42.0|55.0|53.4|°C
t GPU Memory Junction Temperature|*83.0|70.0|85.0|82.4|°C
t GPU VR VDDC Temperature|*69.9|59.8|70.8|69.4|°C
t GPU Hot Spot Temperature|78.0|53.0|80.0|77.4|°C
t GPU VR SoC Temperature|60.0|54.0|61.0|60.0|°C
t GPU VR VDDIO Temperature|66.0|59.0|66.8|65.8|°C
t GPU VR VDDCI Temperature|63.9|56.9|64.5|63.5|°C
>t GPU Hotspots|*66.2|46.5|79.6|66.2|°C
` },
{ width: 'w-182', rows: `
v GPU Core Voltage (VDDCR_GFX)|*0.985|0.669|1.067|0.976|V
v GPU Memory Voltage (VDDIO)|*1.354|1.350|1.356|1.354|V
v GPU SoC Voltage (VDDCR_SOC)|*0.998|0.994|1.042|0.997|V
v GPU Memory Voltage (VDDCI_ME...|0.804|0.802|0.804|0.804|V
f GPU Fan|*3,078|2,849|3,162|3,082|RPM
v GPU Core Current (VDDCR_GFX)|*263.482|12.420|276.731|259.588|A
v GPU Memory Current (VDDIO)|*29.459|15.605|31.140|29.379|A
v GPU SoC Current (VDDCR_SOC)|*51.945|19.832|55.488|52.482|A
v GPU Memory Current (VDDCI_ME...|*21.421|20.101|21.681|21.468|A
v GPU Core TDC Limit|328.000|=|=|=|A
v GPU SOC TDC Limit|82.000|=|=|=|A
v GPU USR TDC Limit|86.000|=|=|=|A
v GPU Core Power (VDDCR_GFX)|*258.578|9.072|282.546|253.858|W
v GPU Memory Power (VDDIO)|*40.026|21.094|42.186|39.771|W
v GPU SoC Power (VDDCR_SOC)|*52.022|20.404|54.932|52.288|W
v GPU Memory Power (VDDCI_MEM)|*17.218|16.156|17.418|17.253|W
v GPU USR Power (VDDCR_USR)|*14.349|1.392|15.257|14.258|W
v Total Graphics Power (TGP)|*389.893|79.509|391.541|385.128|W
v Total Board Power (TBP)|*463.703|97.760|465.646|458.085|W
v GPU Power Maximum|*446.965|114.698|518.739|461.063|W
v GPU PPT (Sustained)|*389.847|79.491|389.963|385.143|W
v GPU PPT Limit (Sustained)|389.850|=|=|=|W
v GPU PPT Limit (Short)|467.820|=|=|=|W
c GPU Front End Clock|*3,216.2|1,247.5|3,341.9|3,168.6|MHz
c GPU Shader Clock|*2,939.0|153.0|2,982.0|2,874.9|MHz
c GPU Front End Clock (Effective)|*3,200.4|171.3|3,214.3|3,111.1|MHz
c GPU Memory Clock|2,786.0|2,785.0|2,786.0|2,785.6|MHz
c GPU SoC Clock|1,500.0|=|=|=|MHz
c GPU FCLK|2,301.0|2,290.5|2,301.0|2,301.0|MHz
c GPU FCLK (Effective)|*2,301.0|1,398.7|2,301.0|2,294.0|MHz
>c GPU Shader Clocks|*2,943.6|1,226.1|2,967.5|2,882.0|MHz
>c GPU Shader Clocks (Effective)|*2,941.1|160.5|2,960.6|2,857.9|MHz
c GPU Shader Clock Frequency Limit|*3,031.6|2,938.2|3,150.0|3,058.4|MHz
c GPU Shader Clock Frequency Limi...|3,150.0|=|=|=|MHz
c GPU Utilization|*100.0|11.0|100.0|98.9|%
c GPU D3D Usage|*99.6|8.2|100.0|98.1|%
c GPU Memory Controller Utilization|*33.0|1.0|58.0|32.6|%
>c GPU D3D Utilizations||0.0|1.7||%
c GPU PPT Limit (Sustained)|*100.0|20.4|100.0|98.8|%
c GPU Core TDC Limit|*80.3|3.8|84.4|79.1|%
c GPU SOC TDC Limit|*63.3|24.2|67.6|64.0|%
>c GPU Thermal Limits||47.0|78.0||%
c GPU Fan PWM|100.0|79.3|100.0|100.0|%
c GPU D3D Memory Dedicated|*8,499|7,451|8,690|8,204|MB
c GPU D3D Memory Dynamic|*215|195|488|212|MB
c PCIe Link Speed|16.0|=|=|=|GT/s
c GPU Memory Usage|*95,353|37,731|95,402|71,873|MB
c Framerate|*0.0|0.0|349.0|234.9|FPS

# PresentMon [Borderlands3.exe]
c Framerate Presented (avg)|*241.3|59.6|949.3|243.1|FPS
c Framerate Presented (99%)|*248.5|0.0|1,025.4|270.9|FPS
c Framerate Presented (1%)|*233.8|0.0|789.3|214.8|FPS
c Framerate Displayed (avg)|*31.6|31.6|948.7|243.0|FPS
c Frame Time Presented (avg)|*4.14|1.05|16.78|4.31|ms
c Frame Time Presented (99%)|*4.28|0.00|93.12|5.02|ms
c Frame Time Presented (1%)|*4.02|0.00|15.92|3.87|ms
c GPU Busy (avg)|*4.13|0.00|17.05|4.23|ms
c GPU Wait (avg)|0.00|0.00|14.70|0.07|ms
c CPU Busy (avg)|*2.03|0.00|16.83|2.52|ms
c CPU Wait (avg)|*2.10|0.00|3.15|1.78|ms

# Network: RealTek Semiconductor/Killer E3000 2.5 Gigabit Ethernet Controller - Ethernet
c Total DL|*386|382|386||MB
c Total UP|11,098|=|=||MB
c Current DL rate|*0.2|0.2|150.4|0.9|KB/s
c Current UP rate|*0.0|0.0|5.5|0.0|KB/s

# Windows Hardware Errors (WHEA)
c Total Errors|0|=|=||~
` },
];

const ICONS = { c: 'clock', v: 'volt', t: 'temp', f: 'fan', '#': 'chip' };
const icon = (id) => `<svg aria-hidden="true"><use href="#i-${id}"/></svg>`;

function rowHtml(line, full) {
  const [head, ...fields] = line.split('|');
  const [, twist, kind, label] = head.match(/^([.>-]?)(\S?) ?(.*)$/);
  const unit = fields[4] === '~' ? '\u00a0' : fields[4] || '';
  let last = '';
  let cells = '';
  for (let i = 0; i < 4; i++) {
    let value = fields[i] || '';
    const changed = value[0] === '*';
    if (changed) value = value.slice(1);
    if (value === '=') value = last;
    last = value;
    const text = !value ? '' : unit === '\u00a0' ? value + unit : unit ? value + ' ' + unit : value;
    cells += `<td class="keep${changed ? ' changed' : ''}">${text}</td>`;
  }
  const chevron = kind === '#' || twist === '-' ? icon('open') : twist === '>' ? icon('closed') : '';
  const cls = 'name' + (kind === '#' ? ' name--group' : '') + (twist ? ' name--child' : '');
  return `<tr><th scope="row"><div class="${cls}"><div class="twist">${chevron}</div>` +
    `<div class="label">${kind ? icon(ICONS[kind]) : ''}<span>${label}</span></div></div></th>` +
    cells + (full ? '' : '<td></td>') + '</tr>';
}

document.getElementById('panels').innerHTML = PANELS.map((p, n) => {
  const rows = p.rows.replace(/^\n|\n$/g, '').split('\n');
  const valueCol = '<col class="w-value">'.repeat(4);
  return `<div class="panel${n ? '' : ' panel--first'}${p.full ? ' panel--full' : ''}">
    <table class="sensors">
      <colgroup><col class="${p.width}">${valueCol}${p.full ? '' : '<col>'}</colgroup>
      <thead><tr><th>Sensor</th><th>Current</th><th>Minimum</th><th>Maximum</th><th>Average</th>${p.full ? '' : '<th></th>'}</tr></thead>
      <tbody>${rows.map((r) => rowHtml(r, p.full)).join('')}</tbody>
    </table>
    <div class="rest"><i class="${p.width}"></i>${'<i class="w-value"></i>'.repeat(4)}</div>
  </div>`;
}).join('');
```
